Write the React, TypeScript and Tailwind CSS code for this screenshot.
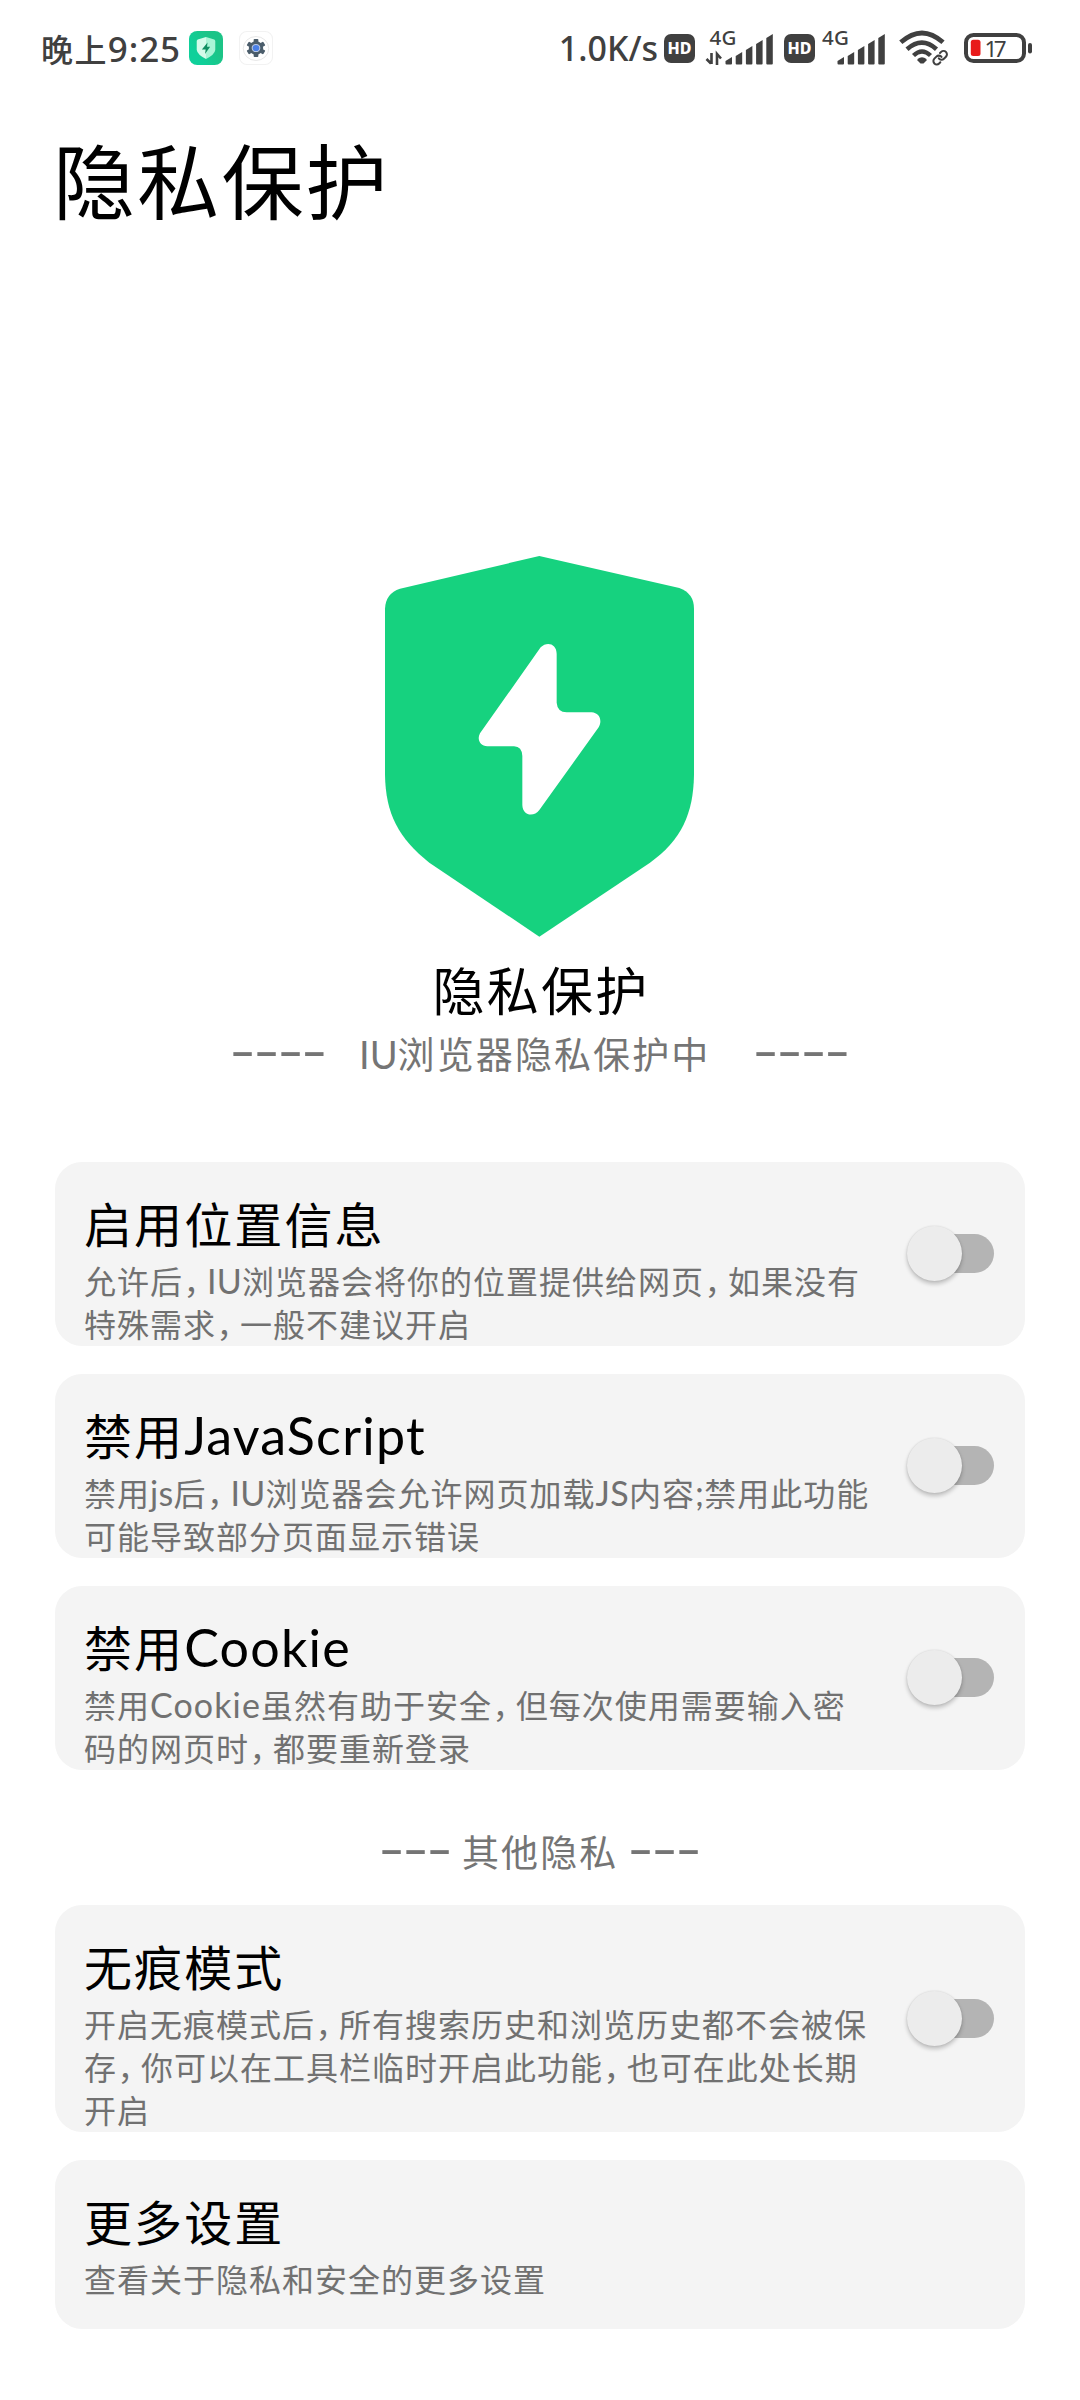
import React from "react";

const INK = "#404040";

/** Splits mixed text into runs so commas and Latin words get their own metrics. */
function Mixed({ text, latin, word = latin }: { text: string; latin: string; word?: string }) {
  const runs = text.match(/，|[A-Za-z;]+|[^，A-Za-z;]+/g) ?? [];
  return (
    <>
      {runs.map((run, i) => {
        if (run === "，") return <span key={i} className="ml-[0.5px] tracking-[-8.6px]">{run}</span>;
        if (/^[A-Za-z;]/.test(run)) return <span key={i} className={run.length > 3 ? word : latin}>{run}</span>;
        return <span key={i}>{run}</span>;
      })}
    </>
  );
}

function Switch() {
  return (
    <button role="switch" aria-checked="false" className="relative mr-[31px] flex h-[56px] w-[88px] shrink-0 items-center">
      <span className="mb-px ml-[9px] h-[39px] w-[79px] rounded-full bg-[#b4b4b4]" />
      <span className="absolute left-[0.5px] top-0 h-[55px] w-[55px] rounded-full bg-[#ececec] shadow-[0_3px_4px_rgba(0,0,0,0.22),0_0_2px_rgba(0,0,0,0.12)]" />
    </button>
  );
}

interface CardProps {
  title: string;
  lines: string[];
  box: string;
  toggle?: boolean;
}

function Card({ title, lines, box, toggle = true }: CardProps) {
  return (
    <section className={`flex items-center justify-between overflow-hidden rounded-[27px] bg-[#f4f4f4] ${box}`}>
      <div className="self-start pl-[29px] pt-[27px]">
        <h2 className="h-[70px] whitespace-nowrap text-[48px] leading-[66px] tracking-[2.1px] text-black">
          <Mixed text={title} latin="font-[Lato] text-[52px] tracking-[1.2px]" />
        </h2>
        <p className="text-[32px] leading-[43px] tracking-[1px] text-[#717171]">
          {lines.map((line) => (
            <span key={line} className="block h-[43px] whitespace-nowrap">
              <Mixed
                text={line}
                latin="font-[Lato] text-[34px] tracking-[0.3px]"
                word="font-[Lato] text-[34px] tracking-[1.1px]"
              />
            </span>
          ))}
        </p>
      </div>
      {toggle && <Switch />}
    </section>
  );
}

function HdBadge() {
  return (
    <span className="flex h-[29px] w-[31px] items-center justify-center rounded-[7px] bg-[#404040] font-['Noto_Sans'] text-[16px] font-extrabold leading-none text-white">
      HD
    </span>
  );
}

function Signal({ arrows = false }: { arrows?: boolean }) {
  const dx = arrows ? 0 : -4;
  const tops = [27, 22, 16, 10, 4];
  const width = arrows ? 67 : 63;
  return (
    <svg width={width} height="36" viewBox={`0 0 ${width} 36`} fill={INK} className="overflow-visible">
      <text x={arrows ? 3.5 : 0} y="15" fontSize="20.5" fontFamily="Noto Sans" fontWeight="500" textLength="27">4G</text>
      {arrows && <path d="M5.500 23v11M0.5 29l4.5 4.500M11 35V24l4 4.5" fill="none" stroke={INK} strokeWidth="2.6" />}
      {tops.map((t, i) => {
        const x = 19.5 + i * 10.2 + dx;
        return <path key={i} d={`M${x} ${t + 4}L${x + 6.5} ${t}V33.6Q${x + 6.5} 34.6 ${x + 5.5} 34.6H${x + 1}Q${x} 34.6 ${x} 33.6Z`} />;
      })}
    </svg>
  );
}

function Wifi() {
  return (
    <svg width="50" height="38" viewBox="0 0 50 38" fill="none" stroke={INK}>
      <path d="M1.8 13.3Q23 -5.5 44 13.3" strokeWidth="4.8" />
      <path d="M8 20.2Q23 7 37.5 20.2" strokeWidth="4.6" />
      <path d="M14.5 26.5Q23 18.5 31.5 26.5" strokeWidth="4.4" />
      <path d="M18.5 30Q23 26.5 27.5 30V31.5L24.5 34.5H21.5L18.5 31.5Z" fill={INK} stroke="none" />
      <g strokeLinecap="round" strokeLinejoin="round" strokeWidth="3" transform="translate(33 20.5) scale(0.68)">
        <path d="M10 13a5 5 0 0 0 7.54.54l3-3a5 5 0 0 0-7.07-7.07l-1.72 1.71" />
        <path d="M14 11a5 5 0 0 0-7.54-.54l-3 3a5 5 0 0 0 7.07 7.07l1.71-1.71" />
      </g>
    </svg>
  );
}

function Battery() {
  return (
    <svg width="68" height="30" viewBox="0 0 68 30">
      <rect x="2" y="2" width="58" height="26" rx="7.5" fill="none" stroke={INK} strokeWidth="4" />
      <rect x="64" y="10" width="4" height="10.5" rx="2" fill={INK} />
      <rect x="6.8" y="6.8" width="9.7" height="16.2" rx="2.5" fill="#e81a1a" />
      <text x="20.5" y="23.5" fontSize="22.5" fontFamily="Noto Sans" fill={INK} textLength="22">17</text>
    </svg>
  );
}

function StatusBar() {
  return (
    <header className="flex h-[96px] items-center text-[#404040]">
      <div className="ml-[41px] flex w-[148px] items-baseline whitespace-nowrap text-[32px] font-medium leading-none tracking-[1.4px]">
        晚上<span className="font-['Noto_Sans'] text-[35px] tracking-[0.9px]">9:25</span>
      </div>
      <svg width="34" height="34" viewBox="0 0 33 34" preserveAspectRatio="none">
        <defs>
          <linearGradient id="tile" x1="0" y1="1" x2="1" y2="0.4">
            <stop offset="0.3" stopColor="#0fd09a" />
            <stop offset="0.8" stopColor="#1cc487" />
          </linearGradient>
        </defs>
        <rect width="33" height="34" rx="8" fill="url(#tile)" />
        <path d="M16.5 6L8.5 8.5Q7.5 9 7.5 10V19Q8 23.5 16.5 28Z" fill="#d4fbea" />
        <path d="M16.5 6L24.5 8.5Q25.5 9 25.5 10V19Q25 23.5 16.5 28Z" fill="#a9f5d6" />
        <path d="M18 11.5L12.5 18.5H16.2L15.5 23L20.5 15.8H17.5Z" fill="#0f8f62" />
      </svg>
      <svg className="ml-[16px]" width="34" height="34" viewBox="0 0 32 34" preserveAspectRatio="none">
        <rect x="0.5" y="0.5" width="31" height="33" rx="7" fill="#fff" stroke="#f2f2f2" />
        <circle cx="16" cy="17.5" r="12" fill="#fff" stroke="#e2e2e2" strokeWidth="0.8" />
        <g fill="#4b5d6b">
          <circle cx="16" cy="17" r="6.8" />
          {[0, 60, 120, 180, 240, 300].map((a) => (
            <rect key={a} x="13.8" y="8" width="4.4" height="4" rx="0.8" transform={`rotate(${a} 16 17)`} />
          ))}
        </g>
        <circle cx="16" cy="17" r="3.6" fill="#4a80e8" stroke="#b9c8e4" strokeWidth="1" />
      </svg>
      <div className="ml-auto mr-[48px] flex items-center">
        <span className="mr-[6px] whitespace-nowrap font-['Noto_Sans'] text-[34px] font-medium leading-none">1.0K/s</span>
        <HdBadge />
        <span className="ml-[11px] mr-[11px]"><Signal arrows /></span>
        <HdBadge />
        <span className="ml-[7px] mr-[14px]"><Signal /></span>
        <Wifi />
        <span className="ml-[15px]"><Battery /></span>
      </div>
    </header>
  );
}

/** A run of wide hyphens. */
function Dashes({ n, box }: { n: number; box: string }) {
  return (
    <span className={`mb-[9px] inline-block ${box}`}>
      <span className="inline-block origin-left scale-x-[2] font-['Noto_Sans'] text-[36px] font-semibold tracking-[0.45px]">
        {"-".repeat(n)}
      </span>
    </span>
  );
}

export default function App() {
  return (
    <main className="flex h-[2400px] w-[1080px] flex-col overflow-hidden bg-white font-['Noto_Sans_CJK_SC',sans-serif]">
      <StatusBar />
      <h1 className="ml-[53px] mt-[22px] h-[120px] text-[82px] leading-[120px] tracking-[2.2px] text-black">隐私保护</h1>

      <div className="mt-[292px] flex flex-col items-center">
        <svg width="360" height="420" viewBox="0 0 1080 1260">
          <path
            fill="#16d27f"
            d="M538 78L958 174Q1002 190 1002 236V735C1000 850 965 930 870 998L538 1220L208 998C115 925 77 850 75 735V236Q77 190 120 176Z"
          />
          <path
            fill="#fff"
            d="M542 352C560 334 590 340 590 372V518Q592 546 620 547H695C718 549 728 570 716 592L538 840C522 862 488 858 487 825V678Q486 650 462 649H382C360 648 350 628 360 610Z"
          />
        </svg>
        <h2 className="h-[76px] pl-[2px] text-[52px] leading-[78px] tracking-[2.3px] text-black">隐私保护</h2>
      </div>

      <div className="flex h-[56px] items-center whitespace-nowrap pl-[231px] text-[37px] leading-[56px] tracking-[2.1px] text-[#757575]">
        <Dashes n={4} box="w-[128px]" />
        <span className="mb-[2px] w-[395px]">
          <span className="font-[Lato] text-[38px] tracking-[0px]">IU</span>浏览器隐私保护中
        </span>
        <Dashes n={4} box="w-[100px]" />
      </div>

      <div className="mt-[80px] flex flex-col gap-[28px] px-[55px]">
        <Card box="h-[184px]" title="启用位置信息" lines={["允许后，IU浏览器会将你的位置提供给网页，如果没有", "特殊需求，一般不建议开启"]} />
        <Card box="h-[184px]" title="禁用JavaScript" lines={["禁用js后，IU浏览器会允许网页加载JS内容;禁用此功能", "可能导致部分页面显示错误"]} />
        <Card box="h-[184px]" title="禁用Cookie" lines={["禁用Cookie虽然有助于安全，但每次使用需要输入密", "码的网页时，都要重新登录"]} />
      </div>

      <div className="mt-[54px] flex h-[56px] items-center whitespace-nowrap pl-[380px] text-[37px] leading-[56px] tracking-[2.1px] text-[#757575]">
        <Dashes n={3} box="w-[82px]" />
        <span className="mb-[2px] w-[167px]">其他隐私</span>
        <Dashes n={3} box="w-[82px]" />
      </div>

      <div className="mt-[25px] flex flex-col gap-[28px] px-[55px]">
        <Card
          box="h-[227px]"
          title="无痕模式"
          lines={["开启无痕模式后，所有搜索历史和浏览历史都不会被保", "存，你可以在工具栏临时开启此功能，也可在此处长期", "开启"]}
        />
        <Card box="h-[169px]" title="更多设置" lines={["查看关于隐私和安全的更多设置"]} toggle={false} />
      </div>
    </main>
  );
}
